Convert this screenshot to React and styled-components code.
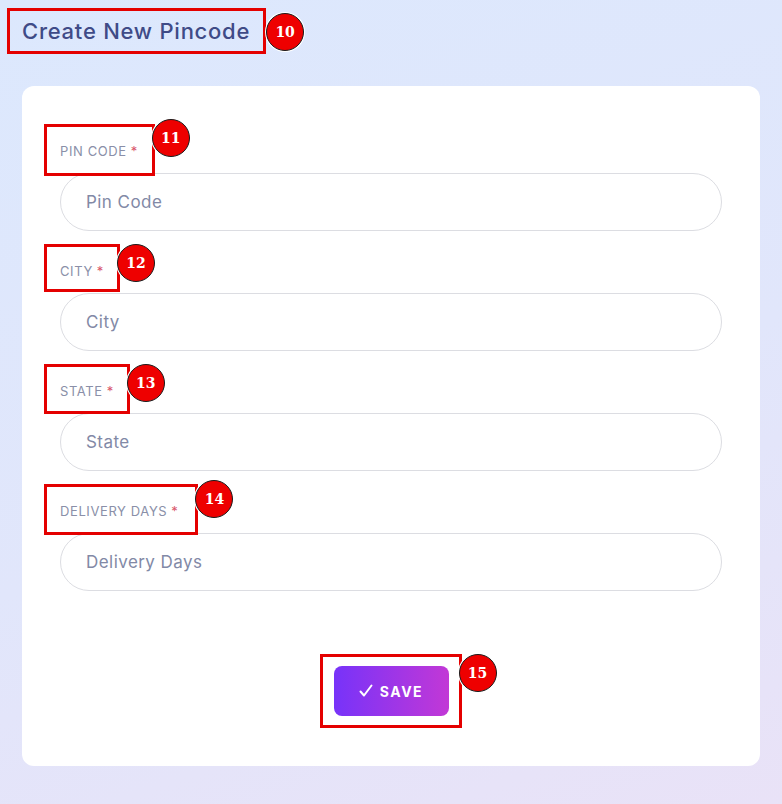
import React from 'react';
import styled, { createGlobalStyle } from 'styled-components';

const GlobalStyle = createGlobalStyle`
    * { box-sizing: border-box; }
    body {
        margin: 0;
        font-family: Inter, "Open Sans", sans-serif;
    }
`;

const Page = styled.div`
    min-height: 100vh;
    padding: 16px 22px 38px;
    background: linear-gradient(160deg, #dce8fd 0%, #e1e6fb 55%, #e9e2f7 100%);
`;

const Title = styled.h1`
    margin: 0;
    font-size: 22px;
    line-height: 30px;
    font-weight: 500;
    color: #3f4b87;
    letter-spacing: 0.75px;
`;

const Card = styled.div`
    margin-top: 40px;
    background: #fff;
    border-radius: 12px;
    padding: 55px 38px 50px;
    display: flex;
    flex-direction: column;
`;

const Field = styled.div`
    display: flex;
    flex-direction: column;
    align-items: flex-start;
    margin-bottom: 30px;
`;

const Label = styled.label`
    display: block;
    font-size: 13px;
    line-height: 20px;
    color: #8a8fa8;
    letter-spacing: 0.6px;
    text-transform: uppercase;
`;

const Star = styled.span`
    color: #d9566a;
    margin-left: 4px;
`;

const Input = styled.input`
    margin-top: 12px;
    width: 100%;
    height: 58px;
    border: 1px solid #dcdde2;
    border-radius: 30px;
    padding: 0 25px;
    font-family: inherit;
    font-size: 17px;
    letter-spacing: 0.45px;
    color: #3f4b87;
    outline: none;
    &::placeholder { color: #8289a6; }
`;

const Actions = styled.div`
    display: flex;
    justify-content: center;
    margin-top: 45px;
`;

const SaveButton = styled.button`
    display: flex;
    align-items: center;
    justify-content: center;
    gap: 7px;
    width: 115px;
    height: 50px;
    border: none;
    border-radius: 8px;
    background: linear-gradient(90deg, #7733f9 0%, #c238d6 100%);
    color: #fff;
    font-family: inherit;
    font-size: 14px;
    font-weight: 700;
    letter-spacing: 1.5px;
    cursor: pointer;
`;

/* annotation overlay: red frame + numbered badge */
const Marked = styled.div`
    position: relative;
    width: fit-content;
`;

const Frame = styled.span`
    position: absolute;
    top: ${({ t }) => t}px;
    left: ${({ l }) => l}px;
    right: ${({ r }) => r}px;
    bottom: ${({ b }) => b}px;
    border: 3px solid #e40000;
    pointer-events: none;
`;

const Badge = styled.span`
    position: absolute;
    top: ${({ by }) => by}px;
    right: ${({ bx }) => -(bx + 22)}px;
    width: 38px;
    height: 38px;
    border-radius: 50%;
    background: #ee0000;
    border: 1px solid #1a1a1a;
    box-shadow: 0 0 0 1px #fff;
    color: #fff;
    font-family: "DejaVu Serif", "Liberation Serif", serif;
    font-weight: 700;
    font-size: 14px;
    line-height: 1;
    display: flex;
    align-items: center;
    justify-content: center;
`;

const Mark = ({ n, t = -17, l = -16, r = -17, b = -14, by = -8, bx = 16, children }) => (
    <Marked>
        {children}
        <Frame t={t} l={l} r={r} b={b}>
            <Badge by={by} bx={bx}>{n}</Badge>
        </Frame>
    </Marked>
);

const fields = [
    { n: 11, label: 'Pin Code', r: -17, b: -15, by: -8 },
    { n: 12, label: 'City', r: -16, b: -11, by: -3 },
    { n: 13, label: 'State', r: -16, b: -13, by: -3 },
    { n: 14, label: 'Delivery Days', r: -20, b: -14, by: -7 },
];

const Check = () => (
    <svg width="14" height="14" viewBox="0 0 14 14" fill="none">
        <path d="M1.5 7.5 L5 11.5 L12.5 1.5" stroke="#fff" strokeWidth="2" strokeLinecap="round" strokeLinejoin="round" />
    </svg>
);

export default function App() {
    return (
        <>
            <GlobalStyle />
            <Page>
                <Mark n={10} t={-8} l={-15} r={-16} b={-8} by={2} bx={19}>
                    <Title>Create New Pincode</Title>
                </Mark>
                <Card>
                    {fields.map(f => (
                        <Field key={f.n}>
                            <Mark n={f.n} r={f.r} b={f.b} by={f.by}>
                                <Label>{f.label}<Star>*</Star></Label>
                            </Mark>
                            <Input placeholder={f.label} />
                        </Field>
                    ))}
                    <Actions>
                        <Mark n={15} t={-12} l={-14} r={-13} b={-12} by={-3}>
                            <SaveButton><Check />SAVE</SaveButton>
                        </Mark>
                    </Actions>
                </Card>
            </Page>
        </>
    );
}
